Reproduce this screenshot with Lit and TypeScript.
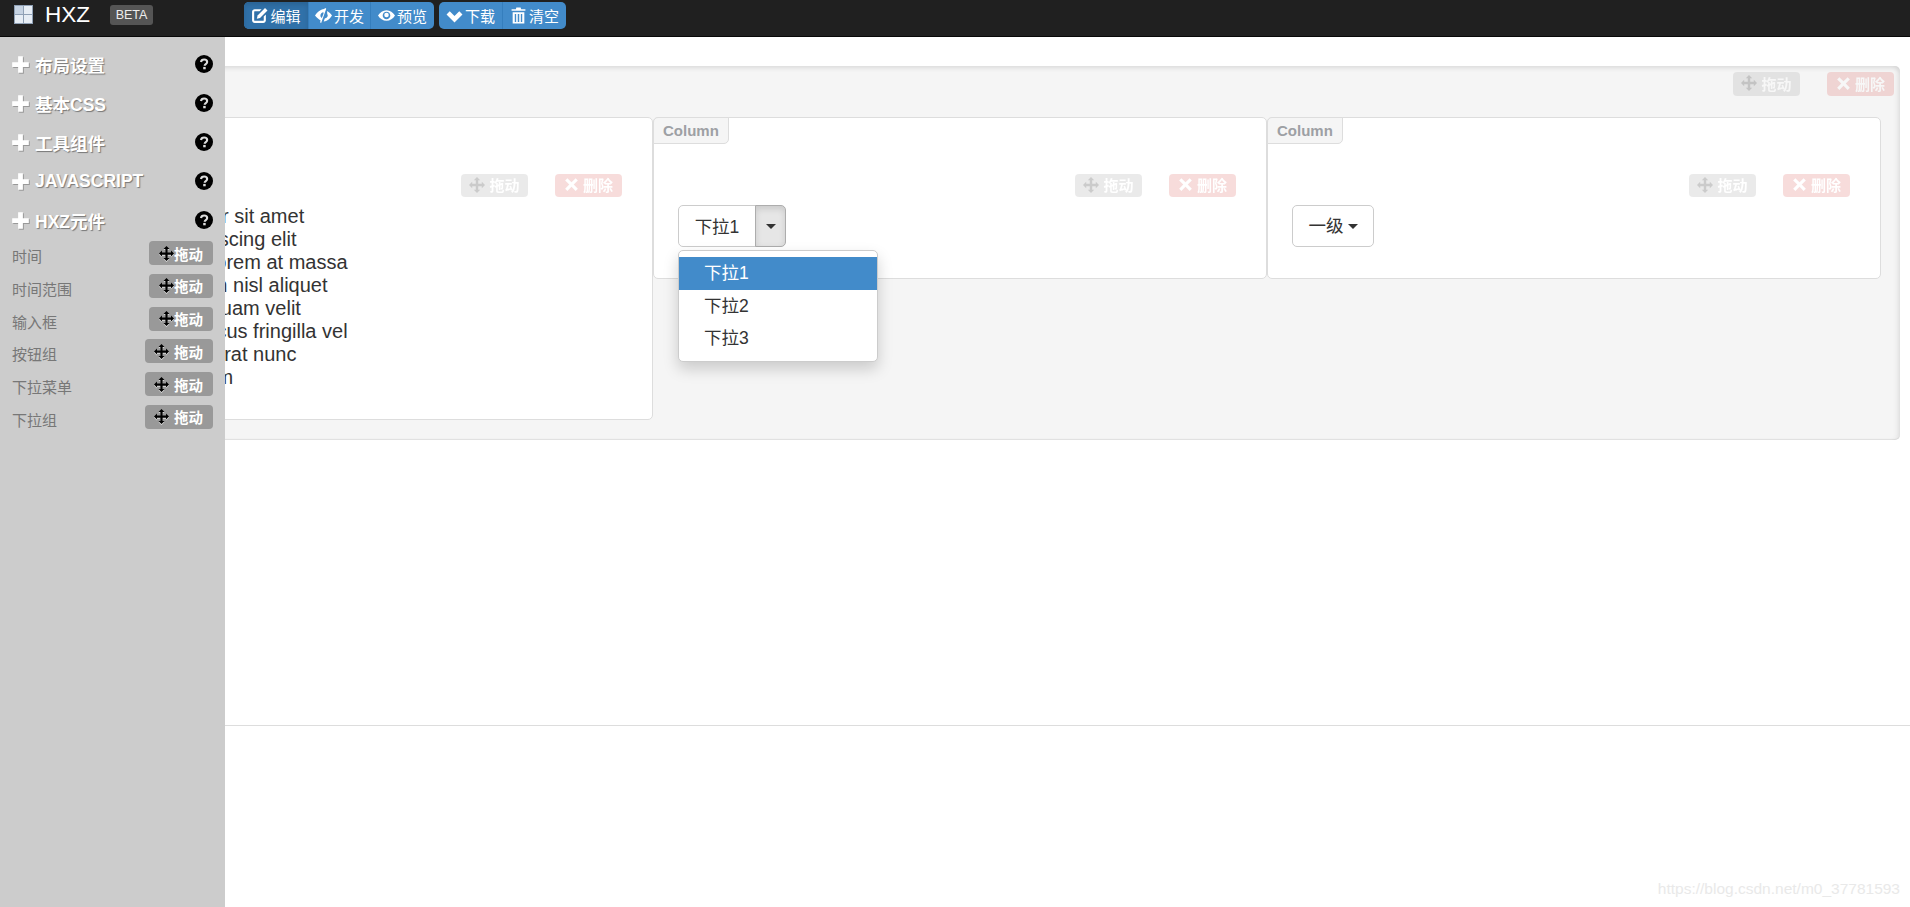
import { LitElement, html, css, svg } from "lit";
import { customElement } from "lit/decorators.js";

const ic = (name: string, cls = "") => {
  const p: Record<string, any> = {
    plus: svg`<path d="M6 1h4v5h5v4h-5v5H6v-5H1V6h5z"/>`,
    move: svg`<path d="M8 0l3.2 3.2H9.2V6.8h3.6V4.8L16 8l-3.2 3.2V9.2H9.2v3.6h2L8 16l-3.2-3.2h2V9.2H3.2v2L0 8l3.2-3.2v2h3.6V3.2h-2z"/>`,
    remove: svg`<path d="M3.6 1.2L8 5.6l4.4-4.4 2.4 2.4L10.4 8l4.4 4.4-2.4 2.4L8 10.4l-4.4 4.4-2.4-2.4L5.6 8 1.2 3.6z"/>`,
    edit: svg`<path fill-rule="evenodd" d="M3.5 2H10L8 4H3.5C3.2 4 3 4.2 3 4.5v8c0 .3.2.5.5.5h8c.3 0 .5-.2.5-.5V9l2-2v5.5c0 1.4-1.1 2.5-2.5 2.5h-8C2.100 15 1 13.900 1 12.500v-8C1 3.100 2.100 2 3.500 2z"/><path d="M13.200 1L15.500 3.300 8.500 10.300 5.500 11 6.200 8z"/>`,
    eyeclose: svg`<path d="M8.600 1.800L9.600 1 10.600 1.700 5.800 15 4.700 14.300 5.300 12.600C3 11.400 1.200 9.400 0 8c1.800-2.800 5-5.800 8.600-6.200zM8 5C6.400 5 5.100 6.300 5.100 8c0 1 .5 1.900 1.300 2.400L8 6.300z"/><path d="M11.400 3.800C13.200 4.800 15 6.500 16 8c-1.200 2-3.800 5.200-7.800 5.700l1-2.900c1.600-.4 2.800-1.300 2.800-2.800 0-.6-.2-1.100-.5-1.500z"/>`,
    eye: svg`<path fill-rule="evenodd" d="M8 3c3.300 0 6.200 2.100 8 5-1.800 2.900-4.700 5-8 5S1.800 10.900 0 8c1.800-2.900 4.700-5 8-5zm0 1.500C6 4.500 4.400 6.100 4.400 8S6 11.500 8 11.500 11.600 9.900 11.600 8 10 4.500 8 4.500z"/><circle cx="8" cy="7.600" r="2.100"/>`,
    chevron: svg`<path d="M8 14.500L.5 7 3.500 4 8 8.500 12.500 4 15.500 7z"/>`,
    trash: svg`<path fill-rule="evenodd" d="M6 .5h4l.5 1.500H14.500V3.500H1.500V2H5.500zM2.500 5h11v10.500h-11zM4.500 6.500v7.500h1.300V6.500zM7.300 6.500v7.500h1.400V6.500zM10.200 6.500v7.500h1.300V6.500z"/>`,
    help: svg`<circle cx="8" cy="8" r="8" fill="#000"/><path d="M5.300 6.200C5.500 4.800 6.600 4 8.100 4c1.600 0 2.700.9 2.700 2.200 0 1.900-2.200 1.900-2.200 3.300" fill="none" stroke="#ddd" stroke-width="1.900"/><rect x="7.300" y="10.600" width="2.200" height="2.100" fill="#ddd"/>`,
  };
  return html`<svg class="ic ${cls}" viewBox="0 0 16 16" fill="currentColor">${p[name]}</svg>`;
};

@customElement("app-root")
export class AppRoot extends LitElement {
  static styles = css`
    :host { display: block; position: relative; width: 100%; height: 907px; overflow: hidden; background: #fff; color: #333;
      font-family: "Liberation Sans", "Noto Sans CJK SC", sans-serif; font-size: 17.5px; }
    * { box-sizing: border-box; }
    .ic { display: block; flex: none; width: 16px; height: 16px; }

    nav { display: flex; align-items: flex-start; height: 37px; background: #202020; border-bottom: 1px solid #080808; color: #fff; }
    .logo { display: grid; grid-template-columns: 8px 8px; gap: 1px; margin: 5px 12px 0 14px; width: 19px; height: 19px; padding: 1px; background: #8fa0b5; }
    .logo i { display: block; height: 8px; background: #e6edf5; }
    .logo i:first-child { background: #c6d3e3; }
    .brand { font-size: 22.500px; line-height: 26px; margin-top: 2px; width: 65px; }
    .beta { width: 43px; height: 20px; margin-top: 5px; margin-right: 91px; background: #555; border-radius: 3px; font-size: 12.500px; line-height: 20px; text-align: center; color: #eee; }
    .group { display: flex; height: 27px; margin: 2px 5px 0 0; border-radius: 5px; overflow: hidden; background: #428bca; }
    .tb { display: flex; align-items: center; justify-content: center; gap: 2px; height: 27px; font-size: 15px; color: #fff; border-left: 1px solid #357ebd; }
    .tb:first-child { border-left: 0; }
    .tb .ic { width: 17px; height: 17px; }
    .tb.active { background: #3071a9; box-shadow: inset 0 3px 5px rgba(0,0,0,.125); }

    main { padding: 29px 10px 0; height: 689px; border-bottom: 1px solid #ddd; }
    .panel { height: 374px; padding: 6px 6px 0 29px; background: #f5f5f5; border-radius: 5px;
      box-shadow: inset 0 3px 5px -1px rgba(0,0,0,.1), inset -5px 0 5px -2px rgba(0,0,0,.06), inset 0 -2px 1px -1px rgba(0,0,0,.08); }
    .ops { display: flex; justify-content: flex-end; gap: 27px; }
    .op { display: flex; align-items: center; justify-content: center; gap: 4px; width: 67px; height: 23px; padding-bottom: 2px; border-radius: 4px; background: #999; color: #fff; font-size: 15px; font-weight: bold; opacity: .2; }
    .op .ic { width: 15px; height: 15px; }
    .op.mv .ic { color: #000; width: 16px; height: 16px; }
    .op.del { background: #d9534f; opacity: .2; }
    .panel > .ops .op { height: 24px; }
    .cols { display: flex; align-items: flex-start; margin: 21px 13px 0 0; }
    .col { position: relative; flex: 1 1 0; min-width: 0; padding: 57px 30px 31px 24px; background: #fff; border: 1px solid #ddd; border-radius: 5px; }
    .col > .ops { margin-top: -1px; }
    .tag { position: absolute; left: -1px; top: -1px; height: 27px; padding: 0 9px; background: #f5f5f5; border: 1px solid #ddd; border-radius: 5px 0 5px 0; color: #9da0a4; font-size: 15px; font-weight: bold; line-height: 25px; }
    ul { margin: 8px 0 -1px -1px; padding: 0; list-style: none; font-size: 20px; line-height: 23px; color: #333; }
    .split { position: relative; display: inline-flex; height: 42px; margin-top: 8px; vertical-align: top; }
    .btn { display: flex; align-items: center; justify-content: center; height: 42px; padding-bottom: 2px; background: #fff; border: 1px solid #ccc; border-radius: 5px; color: #333; font-size: 17.500px; }
    .split .main-b { width: 78px; border-radius: 5px 0 0 5px; }
    .split .car-b { width: 31px; margin-left: -1px; padding-bottom: 0; border-radius: 0 5px 5px 0; background: #e6e6e6; border-color: #adadad; box-shadow: inset 0 3px 6px rgba(0,0,0,.125); }
    .caret { display: block; width: 0; height: 0; border-top: 5px solid #333; border-left: 5px solid transparent; border-right: 5px solid transparent; }
    .one { width: 82px; gap: 4px; margin-top: 8px; padding-bottom: 3px; }
    .one .caret { margin-top: 4px; }
    .menu { position: absolute; top: 45px; left: 0; width: 200px; height: 112px; padding: 6px 0; background: #fff; border: 1px solid #ccc; border-radius: 5px; box-shadow: 0 7px 15px rgba(0,0,0,.175); z-index: 2; }
    .menu div { height: 32.500px; padding-left: 25px; line-height: 32.500px; font-size: 17.500px; color: #333; }
    .menu div.on { background: #428bca; color: #fff; }

    aside { position: absolute; left: 0; top: 37px; bottom: 0; width: 225px; padding: 8px 12px 0 12px; background: #ccc; z-index: 3; }
    .hd { display: flex; align-items: center; height: 39px; color: #fff; font-size: 17.500px; font-weight: bold; text-shadow: 1px 1px 1px #777; }
    .hd > .ic:first-child { width: 19px; height: 19px; margin-right: 5px; margin-left: -1px; filter: drop-shadow(1px 1px 0 #999); }
    .hd .help { width: 18px; height: 18px; margin-left: auto; margin-top: -2px; }
    .items { margin-top: 1px; }
    .it { display: flex; align-items: flex-start; justify-content: space-between; height: 32.800px; color: #777; font-size: 15px; }
    .it span.t { padding-top: 5px; line-height: 22px; }
    .drag { display: flex; align-items: center; height: 24px; padding: 0 10px; background: #999; border-radius: 4px; color: #fff; font-size: 14.500px; font-weight: bold; gap: 0; }
    .drag.w { padding-left: 9px; gap: 5px; }
    .drag .ic { width: 15px; height: 15px; color: #000; filter: drop-shadow(0 1px 0 #ddd); }

    .wm { position: absolute; right: 10px; bottom: 8px; font-size: 15.500px; line-height: 20px; color: #e9e9e9; }
  `;

  private op(mv: boolean) {
    return mv
      ? html`<span class="op mv">${ic("move")}拖动</span>`
      : html`<span class="op del">${ic("remove")}删除</span>`;
  }
  private ops() {
    return html`<div class="ops">${this.op(true)}${this.op(false)}</div>`;
  }

  render() {
    const list = ["Lorem ipsum dolor sit amet", "Consectetur adipiscing elit", "Integer molestie lorem at massa", "Facilisis in pretium nisl aliquet", "Nulla volutpat aliquam velit", "Faucibus porta lacus fringilla vel", "Aenean sit amet erat nunc", "Eget porttitor lorem"];
    const heads = ["布局设置", "基本CSS", "工具组件", "JAVASCRIPT", "HXZ元件"];
    const items: [string, boolean][] = [["时间", false], ["时间范围", false], ["输入框", false], ["按钮组", true], ["下拉菜单", true], ["下拉组", true]];
    const tb = (i: string, t: string, w: number, act = false) =>
      html`<div class="tb ${act ? "active" : ""}" style="width:${w}px">${ic(i)}${t}</div>`;
    return html`
      <nav>
        <div class="logo"><i></i><i></i><i></i><i></i></div>
        <div class="brand">HXZ</div>
        <div class="beta">BETA</div>
        <div class="group">${tb("edit", "编辑", 64, true)}${tb("eyeclose", "开发", 62)}${tb("eye", "预览", 64)}</div>
        <div class="group">${tb("chevron", "下载", 63)}${tb("trash", "清空", 64)}</div>
      </nav>
      <main>
        <section class="panel">
          ${this.ops()}
          <div class="cols">
            <div class="col">
              <span class="tag">Column</span>
              ${this.ops()}
              <ul>${list.map((l) => html`<li>${l}</li>`)}</ul>
            </div>
            <div class="col">
              <span class="tag">Column</span>
              ${this.ops()}
              <div class="split">
                <div class="btn main-b">下拉1</div>
                <div class="btn car-b"><span class="caret"></span></div>
                <div class="menu"><div class="on">下拉1</div><div>下拉2</div><div>下拉3</div></div>
              </div>
            </div>
            <div class="col">
              <span class="tag">Column</span>
              ${this.ops()}
              <div class="btn one">一级<span class="caret"></span></div>
            </div>
          </div>
        </section>
      </main>
      <aside>
        ${heads.map((h) => html`<div class="hd">${ic("plus")}<span>${h}</span>${ic("help", "help")}</div>`)}
        <div class="items">
          ${items.map(([t, w]) => html`<div class="it"><span class="t">${t}</span><span class="drag ${w ? "w" : ""}">${ic("move")}拖动</span></div>`)}
        </div>
      </aside>
      <div class="wm">https://blog.csdn.net/m0_37781593</div>
    `;
  }
}
